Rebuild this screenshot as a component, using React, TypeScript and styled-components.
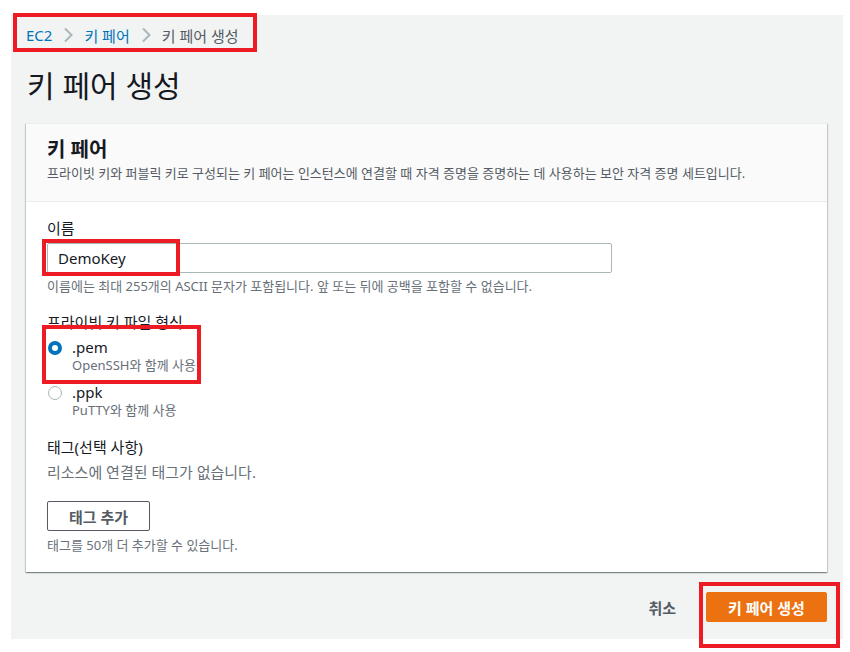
import React from 'react'
import styled, { createGlobalStyle } from 'styled-components'

const GlobalStyle = createGlobalStyle`
  html, body {
    margin: 0;
    background: #ffffff;
    font-family: "Noto Sans", "Noto Sans CJK KR", sans-serif;
    color: #16191f;
  }
`

const Screen = styled.div`
  padding: 15px 7px 13px 11px;
`

const Page = styled.div`
  position: relative;
  width: 832px;
  height: 624px;
  box-sizing: border-box;
  background: #f2f3f3;
  padding: 10px 16px 0 15px;
`

const Breadcrumbs = styled.nav`
  display: flex;
  align-items: center;
  gap: 11px;
  height: 20px;
  font-size: 15px;
`

const Crumb = styled.span<{ $current?: boolean }>`
  color: ${p => (p.$current ? '#545b64' : '#0073bb')};
`

const Title = styled.h1`
  margin: 23px 0 0 1px;
  font-size: 30px;
  font-weight: 400;
  line-height: 36px;
  color: #16191f;
`

const Card = styled.section`
  margin-top: 19px;
  background: #ffffff;
  box-shadow: 0 1px 1px 0 rgba(0, 28, 36, 0.3), 1px 1px 1px 0 rgba(0, 28, 36, 0.15), -1px 1px 1px 0 rgba(0, 28, 36, 0.15);
  border-top: 1px solid #eaeded;
`

const CardHeader = styled.header`
  background: #fafafa;
  border-bottom: 1px solid #eaeded;
  padding: 13px 21px 0;
  height: 78px;
  box-sizing: border-box;
`

const CardTitle = styled.h2`
  margin: 0;
  font-size: 20px;
  font-weight: 700;
  line-height: 26px;
`

const Description = styled.p`
  margin: 0;
  font-size: 13px;
  line-height: 20px;
  color: #545b64;
`

const CardBody = styled.div`
  padding: 15px 21px 17px;
`

const Field = styled.div<{ $gap?: number }>`
  margin-top: ${p => p.$gap ?? 0}px;
`

const Label = styled.div`
  font-size: 15px;
  line-height: 22px;
  color: #16191f;
`

const TextInput = styled.input`
  display: block;
  margin-top: 4px;
  width: 565px;
  height: 30px;
  box-sizing: border-box;
  border: 1px solid #aab7b8;
  border-radius: 2px;
  padding: 0 10px;
  font-family: inherit;
  font-size: 15px;
  color: #16191f;
  outline: none;
`

const Hint = styled.div<{ $gap?: number }>`
  margin-top: ${p => p.$gap ?? 3}px;
  font-size: 13px;
  line-height: 20px;
  color: #687078;
`

const RadioGroup = styled.div`
  margin-top: 4px;
  display: flex;
  flex-direction: column;
  gap: 9px;
`

const RadioRow = styled.label`
  display: flex;
  align-items: flex-start;
  gap: 10px;
  padding-left: 1px;
`

const RadioDot = styled.span<{ $checked?: boolean }>`
  margin-top: 4px;
  width: 14px;
  height: 14px;
  border-radius: 50%;
  box-sizing: border-box;
  border: ${p => (p.$checked ? '4px solid #0073bb' : '1px solid #aab7b8')};
  background: #ffffff;
  flex-shrink: 0;
`

const RadioText = styled.div`
  display: flex;
  flex-direction: column;
`

const RadioLabel = styled.span`
  font-size: 15px;
  line-height: 20px;
  color: #16191f;
`

const RadioSub = styled.span`
  font-size: 13px;
  line-height: 16px;
  color: #687078;
`

const Muted = styled.div`
  margin-top: 3px;
  font-size: 15px;
  line-height: 22px;
  color: #687078;
`

const SecondaryButton = styled.button`
  margin-top: 18px;
  display: block;
  width: 103px;
  height: 30px;
  background: #ffffff;
  border: 1px solid #545b64;
  border-radius: 2px;
  font-family: inherit;
  font-size: 15px;
  font-weight: 700;
  color: #545b64;
`

const Footer = styled.div`
  display: flex;
  justify-content: flex-end;
  align-items: center;
  gap: 30px;
  margin-top: 20px;
`

const LinkButton = styled.button`
  background: none;
  border: none;
  padding: 0;
  font-family: inherit;
  font-size: 15px;
  font-weight: 700;
  color: #545b64;
`

const PrimaryButton = styled.button`
  width: 121px;
  height: 30px;
  background: #ec7211;
  border: 1px solid #ec7211;
  border-radius: 2px;
  font-family: inherit;
  font-size: 15px;
  font-weight: 700;
  color: #ffffff;
`

const Highlight = styled.div<{ $x: number; $y: number; $w: number; $h: number }>`
  position: absolute;
  left: ${p => p.$x}px;
  top: ${p => p.$y}px;
  width: ${p => p.$w}px;
  height: ${p => p.$h}px;
  box-sizing: border-box;
  border: 4px solid #ed1c24;
  pointer-events: none;
`

const Chevron = () => (
  <svg width="10" height="16" viewBox="0 0 10 16">
    <path d="M2 1.5l6.5 6.5-6.5 6.5" fill="none" stroke="#aab7b8" strokeWidth="2" />
  </svg>
)

export default function App () {
  return (
    <Screen>
      <GlobalStyle />
      <Page>
        <Breadcrumbs>
          <Crumb>EC2</Crumb>
          <Chevron />
          <Crumb>키 페어</Crumb>
          <Chevron />
          <Crumb $current>키 페어 생성</Crumb>
        </Breadcrumbs>
        <Title>키 페어 생성</Title>
        <Card>
          <CardHeader>
            <CardTitle>키 페어</CardTitle>
            <Description>
              프라이빗 키와 퍼블릭 키로 구성되는 키 페어는 인스턴스에 연결할 때 자격 증명을 증명하는 데 사용하는 보안 자격 증명 세트입니다.
            </Description>
          </CardHeader>
          <CardBody>
            <Field>
              <Label>이름</Label>
              <TextInput defaultValue="DemoKey" />
              <Hint>이름에는 최대 255개의 ASCII 문자가 포함됩니다. 앞 또는 뒤에 공백을 포함할 수 없습니다.</Hint>
            </Field>
            <Field $gap={15}>
              <Label>프라이빗 키 파일 형식</Label>
              <RadioGroup>
                <RadioRow>
                  <RadioDot $checked />
                  <RadioText>
                    <RadioLabel>.pem</RadioLabel>
                    <RadioSub>OpenSSH와 함께 사용</RadioSub>
                  </RadioText>
                </RadioRow>
                <RadioRow>
                  <RadioDot />
                  <RadioText>
                    <RadioLabel>.ppk</RadioLabel>
                    <RadioSub>PuTTY와 함께 사용</RadioSub>
                  </RadioText>
                </RadioRow>
              </RadioGroup>
            </Field>
            <Field $gap={18}>
              <Label>태그(선택 사항)</Label>
              <Muted>리소스에 연결된 태그가 없습니다.</Muted>
              <SecondaryButton>태그 추가</SecondaryButton>
              <Hint $gap={4}>태그를 50개 더 추가할 수 있습니다.</Hint>
            </Field>
          </CardBody>
        </Card>
        <Footer>
          <LinkButton>취소</LinkButton>
          <PrimaryButton>키 페어 생성</PrimaryButton>
        </Footer>
        <Highlight $x={2} $y={-2} $w={244} $h={39} />
        <Highlight $x={31} $y={224} $w={138} $h={37} />
        <Highlight $x={31} $y={310} $w={159} $h={59} />
        <Highlight $x={688} $y={567} $w={141} $h={66} />
      </Page>
    </Screen>
  )
}
